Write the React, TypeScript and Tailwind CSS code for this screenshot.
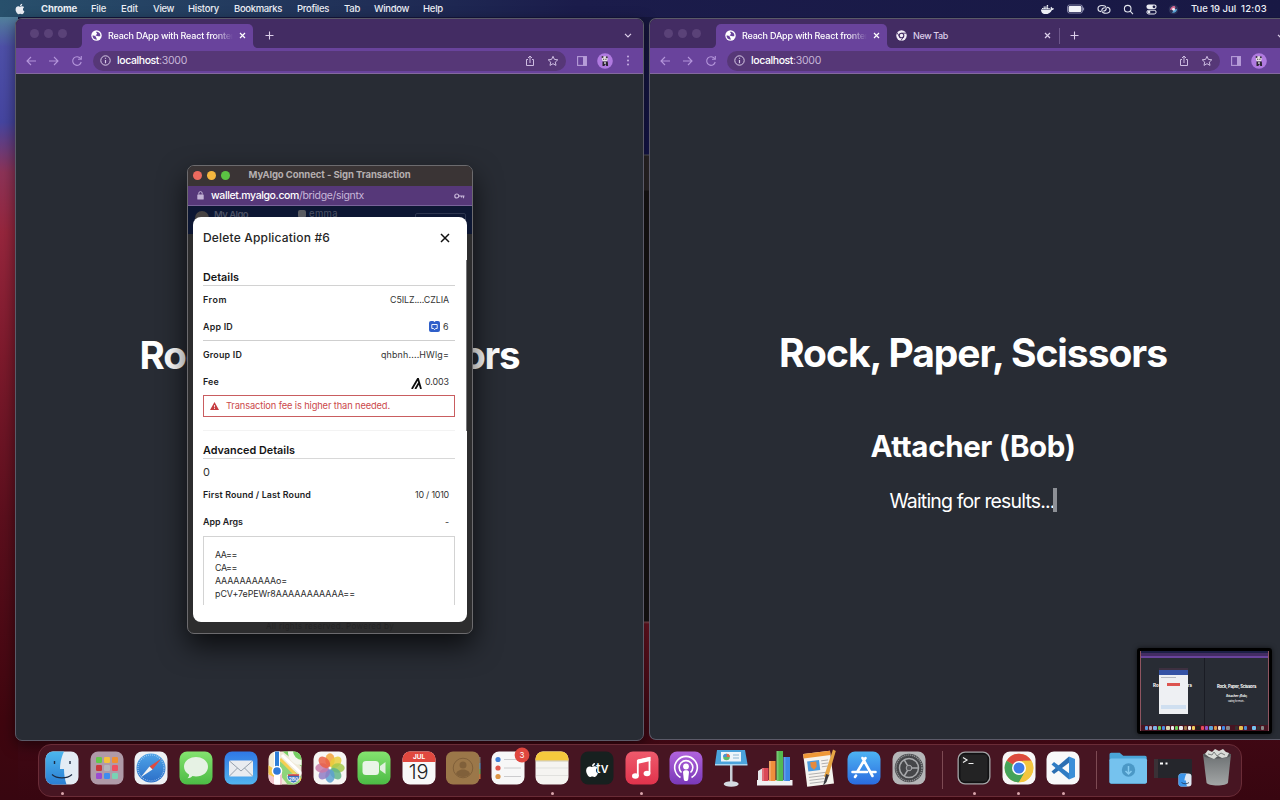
import { useLayoutEffect, useRef, type ReactNode } from "react";
import { FaApple, FaDocker } from "react-icons/fa";

/** Single line of text, tracked so that it occupies `w` pixels. */
function Fit({ w, className = "", children }: { w: number; className?: string; children: string }) {
  const ref = useRef<HTMLSpanElement>(null);
  useLayoutEffect(() => {
    const el = ref.current;
    if (!el) return;
    el.style.letterSpacing = "0px";
    const natural = el.getBoundingClientRect().width;
    el.style.letterSpacing = `${(w - natural) / children.length}px`;
  }, [w, children]);
  return (
    <span ref={ref} className={`block w-max shrink-0 whitespace-pre ${className}`}>
      {children}
    </span>
  );
}

const menus = [
  { label: "File", w: 15, cell: "w-[30px]" },
  { label: "Edit", w: 17, cell: "w-[32px]" },
  { label: "View", w: 21, cell: "w-[35px]" },
  { label: "History", w: 31, cell: "w-[46px]" },
  { label: "Bookmarks", w: 48, cell: "w-[63px]" },
  { label: "Profiles", w: 32, cell: "w-[47px]" },
  { label: "Tab", w: 16, cell: "w-[30px]" },
  { label: "Window", w: 35, cell: "w-[49px]" },
  { label: "Help", w: 20, cell: "w-[30px]" },
];

function MenuBar() {
  return (
    <header className="flex h-[17px] shrink-0 items-center bg-linear-to-r from-[#28506c] via-[#1b1c4b] via-45% to-[#181844] pt-px text-[9.5px] font-medium text-[#eceff5]">
      <div className="flex w-[41px] pl-[14px]">
        <FaApple className="size-[12px]" />
      </div>
      <div className="w-[50px]">
        <Fit w={36} className="font-bold">Chrome</Fit>
      </div>
      {menus.map((m) => (
        <div key={m.label} className={m.cell}>
          <Fit w={m.w}>{m.label}</Fit>
        </div>
      ))}
      <div className="ml-auto flex items-center pr-[13px]">
        <FaDocker className="size-[13px]" />
        <svg className="ml-[13px] h-[10px] w-[18px]" viewBox="0 0 18 10">
          <rect x="0.5" y="1" width="15" height="8" rx="2" fill="none" stroke="#9a9dbb" strokeWidth="0.8" />
          <rect x="1.6" y="2.1" width="12.8" height="5.8" rx="1" fill="#f2f3f8" />
          <path d="M16.6 3.6v2.8" stroke="#9a9dbb" />
        </svg>
        <svg className="ml-[12px] h-[11px] w-[14px]" viewBox="0 0 14 11" fill="none" stroke="#e3e5ee" strokeWidth="1.1">
          <path d="M4 7.6C2 7.4 1 6.200 1 4.700 1 2.800 2.600 1.500 5 1.500c2.600 0 4.200 1.200 4.200 2.900S7.800 7 6.200 7" />
          <path d="M10 3.200c2 .2 3 1.400 3 2.900 0 1.900-1.600 3.200-4 3.200-2.600 0-4.200-1.200-4.200-2.900S6.200 3.800 7.800 3.800" />
        </svg>
        <svg className="ml-[12px] size-[11px]" viewBox="0 0 11 11" fill="none" stroke="#e3e5ee" strokeWidth="1.1">
          <circle cx="4.700" cy="4.700" r="3.300" />
          <path d="M7.200 7.200l2.800 2.900" />
        </svg>
        <svg className="ml-[12px] size-[11px]" viewBox="0 0 11 11">
          <rect x="0.400" y="0.600" width="10.200" height="4.400" rx="2.200" fill="#e9eaf2" />
          <circle cx="8" cy="2.800" r="1.400" fill="#1a1a48" />
          <rect x="0.900" y="6.200" width="9.200" height="3.800" rx="1.900" fill="none" stroke="#e9eaf2" />
          <circle cx="3" cy="8.100" r="1.400" fill="#e9eaf2" />
        </svg>
        <svg className="ml-[11px] size-[11px]" viewBox="0 0 11 11">
          <circle cx="5.500" cy="5.500" r="4.800" fill="#2c3158" />
          <path d="M2 6c1-4 4-4.500 5-3.500S7 5 5.500 5.500z" fill="#d76a92" />
          <path d="M9 5c0 3-3 4.500-5 3.500 1-1 2-2 1.500-3z" fill="#5aa6d8" />
          <circle cx="5.500" cy="5.300" r="1.400" fill="#f2f0fa" />
        </svg>
        <Fit w={45} className="ml-[12px]">Tue 19 Jul</Fit>
        <Fit w={26} className="ml-[5px]">12:03</Fit>
      </div>
    </header>
  );
}

function Cross() {
  return (
    <svg className="size-[7px] shrink-0" viewBox="0 0 7 7" stroke="currentColor" strokeWidth="1.200">
      <path d="M1 1l5 5M6 1L1 6" />
    </svg>
  );
}

function Plus() {
  return (
    <svg className="size-[9px] shrink-0" viewBox="0 0 9 9" stroke="#dccfea" strokeWidth="1.100">
      <path d="M4.500 0.500v8M0.500 4.500h8" />
    </svg>
  );
}

function ActiveTab() {
  return (
    <div className="relative flex h-[24px] w-[171px] items-center rounded-t-[5px] bg-[#69439c] pb-px pl-[9px] text-white">
      <svg className="absolute bottom-0 -left-[5px] size-[5px]" viewBox="0 0 5 5">
        <path d="M5 0v5H0c3 0 5-2 5-5z" fill="#69439c" />
      </svg>
      <svg className="absolute -right-[5px] bottom-0 size-[5px]" viewBox="0 0 5 5">
        <path d="M0 0v5h5C2 5 0 3 0 0z" fill="#69439c" />
      </svg>
      <svg className="size-[11px] shrink-0" viewBox="0 0 11 11">
        <circle cx="5.500" cy="5.500" r="5.200" fill="#fff" />
        <path d="M1.500 5.500c2-.3 3.200.4 3.500 1.800.2 1 .8 1 .8 2.400-2.700 0-4.400-2-4.300-4.200zM5 1.700c.3 1.300 1.200 1 1 2.100-.1.900-1.300.9-1.400 1.700 1.500.3 2.700 1.200 4.600.7.600-2-.6-4.600-4.200-4.500z" fill="#69439c" />
      </svg>
      <div className="ml-[6px] w-[125px] overflow-hidden mask-r-from-85% mask-r-to-100%">
        <Fit w={128} className="text-[9px] font-medium">Reach DApp with React fronten</Fit>
      </div>
      <div className="ml-[6px]">
        <Cross />
      </div>
    </div>
  );
}

function TrafficDots() {
  return (
    <div className="-mt-[1px] flex w-[66px] gap-[5px] pl-[14px]">
      <i className="size-[9px] rounded-full bg-[#5a4278]" />
      <i className="size-[9px] rounded-full bg-[#5a4278]" />
      <i className="size-[9px] rounded-full bg-[#5a4278]" />
    </div>
  );
}

function Avatar() {
  return (
    <svg className="size-[16px] shrink-0" viewBox="0 0 16 16">
      <circle cx="8" cy="8" r="7.800" fill="#b07ae0" />
      <circle cx="7.800" cy="6" r="2.800" fill="#e8e2e4" />
      <circle cx="5.500" cy="4" r="1" fill="#3b3440" />
      <circle cx="9.800" cy="4.200" r="1" fill="#3b3440" />
      <path d="M6.200 6.200h1M8.400 6.200h1" stroke="#222" strokeWidth="1.100" />
      <path d="M5.500 8.500h5.300l.3 4.500H9.400l-1-2-1 2H5.500z" fill="#29242e" />
      <path d="M7.300 9h1.400v2H7.300z" fill="#ddd" />
    </svg>
  );
}

function Toolbar({ field, menu }: { field: string; menu?: boolean }) {
  return (
    <div className="flex h-[26px] shrink-0 items-center border-b border-[#84699f] bg-[#69439c] text-[#c7afe4]">
      <svg className="ml-[10px] h-[12px] w-[57px] shrink-0" viewBox="0 0 57 12" fill="none" stroke="#b394da" strokeWidth="1.100">
        <path d="M10 6H1M5 2L1 6l4 4M23 6h9M28 2l4 4-4 4" />
        <path d="M54.500 3.500A4.300 4.300 0 1 0 55.200 7M55.300 1v3.300H52" />
      </svg>
      <div className={`ml-[10px] flex h-[20px] shrink-0 items-center rounded-full bg-[#563777] pr-[7px] pl-[7px] ${field}`}>
        <svg className="size-[11px]" viewBox="0 0 11 11" fill="none" stroke="#d8cbe6" strokeWidth="1">
          <circle cx="5.500" cy="5.500" r="4.700" />
          <path d="M5.500 5v3.200M5.500 2.700v1.100" strokeWidth="1.200" />
        </svg>
        <Fit w={42} className="ml-[6px] text-[10.500px] font-medium text-white">localhost</Fit>
        <Fit w={28} className="text-[10.500px] text-[#c6b5d8]">:3000</Fit>
        <svg className="ml-auto size-[12px]" viewBox="0 0 12 12" fill="none" stroke="#cdbce0" strokeWidth="1">
          <path d="M4 4.500H2.500v6h7v-6H8M6 8V1M4 3l2-2 2 2" />
        </svg>
        <svg className="ml-[11px] size-[12px]" viewBox="0 0 12 12" fill="none" stroke="#cdbce0" strokeWidth="1">
          <path d="M6 1.300l1.400 3.100 3.400.4-2.500 2.300.7 3.300L6 8.700l-3 1.700.7-3.300L1.200 4.800l3.400-.4z" />
        </svg>
      </div>
      <svg className="mr-[10px] ml-[11px] h-[10px] w-[10px] shrink-0" viewBox="0 0 10 10">
        <rect x="0.600" y="0.600" width="8.800" height="8.800" fill="none" stroke="#b69cd8" strokeWidth="1.100" />
        <path d="M6 0.500h3.500v9H6z" fill="#b69cd8" />
      </svg>
      <Avatar />
      {menu && (
        <svg className="ml-[13px] h-[11px] w-[4px] shrink-0" viewBox="0 0 4 11" fill="#c7afe4">
          <circle cx="2" cy="1.500" r="1" />
          <circle cx="2" cy="5.500" r="1" />
          <circle cx="2" cy="9.500" r="1" />
        </svg>
      )}
    </div>
  );
}

function Chevron() {
  return (
    <svg className="h-[5px] w-[8px] shrink-0" viewBox="0 0 8 5" fill="none" stroke="#dccfea" strokeWidth="1.200">
      <path d="M1 0.800l3 3 3-3" />
    </svg>
  );
}

function LeftWindow() {
  return (
    <section className="absolute top-[18px] left-[15px] flex h-[723px] w-[629px] flex-col overflow-hidden rounded-[7px] border border-[#5b5a68] bg-[#282c34] shadow-[0_4px_14px_rgba(0,0,0,0.500)]">
      <div className="flex h-[29px] shrink-0 items-end bg-[#432c63]">
        <div className="self-center">
          <TrafficDots />
        </div>
        <ActiveTab />
        <div className="flex h-[24px] flex-1 items-center justify-between pr-[11px] pb-px pl-[12px]">
          <Plus />
          <Chevron />
        </div>
      </div>
      <Toolbar field="w-[473px]" menu />
      <h1 className="mt-[255px] flex justify-center text-[38.500px] leading-[52px] font-bold text-white">
        <Fit w={380}>Rock, Paper, Scissors</Fit>
      </h1>
    </section>
  );
}

function RightWindow() {
  return (
    <section className="absolute top-[18px] left-[649px] flex h-[722px] w-[631px] flex-col overflow-hidden rounded-l-[7px] border border-r-0 border-[#5b5a68] bg-[#282c34]">
      <div className="flex h-[29px] shrink-0 items-end bg-[#432c63]">
        <div className="self-center">
          <TrafficDots />
        </div>
        <ActiveTab />
        <div className="flex h-[24px] flex-1 items-center pb-px pl-[9px] text-[#dccfea]">
          <svg className="size-[11px]" viewBox="0 0 11 11">
            <circle cx="5.500" cy="5.500" r="5.200" fill="#f3eef8" />
            <circle cx="5.500" cy="5.500" r="2.300" fill="none" stroke="#432c63" strokeWidth="1.100" />
            <path d="M5.500 3.200h5M3.500 6.600L1 2.600M7.500 6.600l-2.500 4" stroke="#432c63" strokeWidth="0.900" />
          </svg>
          <Fit w={35} className="ml-[6px] text-[9px] font-medium">New Tab</Fit>
          <div className="ml-[96px]">
            <Cross />
          </div>
          <i className="ml-[8px] h-[16px] w-px bg-[#6d578b]" />
          <div className="ml-[10px]">
            <Plus />
          </div>
        </div>
        <div className="-mr-[5px] flex h-[24px] items-center">
          <Chevron />
        </div>
      </div>
      <Toolbar field="w-[493px]" />
      <div className="flex w-[646px] flex-col items-center text-white">
        <h1 className="mt-[253px] text-[39px] leading-[52px] font-bold">
          <Fit w={388}>Rock, Paper, Scissors</Fit>
        </h1>
        <h2 className="mt-[47px] text-[29.500px] leading-[40px] font-bold">
          <Fit w={205}>Attacher (Bob)</Fit>
        </h2>
        <p className="mt-[21px] flex items-center text-[19.500px] leading-[28px]">
          <Fit w={165}>Waiting for results...</Fit>
          <i className="-mt-[2px] -ml-[2px] h-[24px] w-[4px] bg-[#8d9096]" />
        </p>
      </div>
    </section>
  );
}

function Row({ label, w, height, children }: { label: string; w: number; height: string; children: ReactNode }) {
  return (
    <div className={`flex items-center justify-between pr-[6px] ${height}`}>
      <Fit w={w} className="font-semibold text-[#1d1d1f]">{label}</Fit>
      <div className="flex items-center text-[#333]">{children}</div>
    </div>
  );
}

function WalletPopup() {
  return (
    <section className="absolute top-[165px] left-[187px] flex h-[469px] w-[286px] flex-col overflow-hidden rounded-[7px] border border-[#6c6b6e] bg-[#2d2d2e] shadow-[0_12px_28px_rgba(0,0,0,0.700)]">
      <div className="flex h-[20px] shrink-0 items-center bg-[#3a3435] pb-[2px] pl-[5px]">
        <div className="flex gap-[5px]">
          <i className="size-[9px] rounded-full bg-[#ec6a5e]" />
          <i className="size-[9px] rounded-full bg-[#f4b63f]" />
          <i className="size-[9px] rounded-full bg-[#5bc243]" />
        </div>
        <Fit w={162} className="ml-[18.500px] text-[9.500px] font-bold text-[#b5afb0]">MyAlgo Connect - Sign Transaction</Fit>
      </div>
      <div className="flex h-[20px] shrink-0 items-center border-b border-[#79639a] bg-[#563879] pr-[7px] pl-[9px]">
        <svg className="h-[9px] w-[7px]" viewBox="0 0 7 9">
          <rect x="0.300" y="3.500" width="6.400" height="5" rx="0.600" fill="#c3b3d6" />
          <path d="M1.800 3.500V2.300a1.700 1.700 0 0 1 3.400 0v1.200" fill="none" stroke="#c3b3d6" />
        </svg>
        <Fit w={88} className="ml-[7px] text-[10.500px] font-medium text-white">wallet.myalgo.com</Fit>
        <Fit w={65} className="text-[10.500px] text-[#c8b7da]">/bridge/signtx</Fit>
        <svg className="ml-auto h-[6px] w-[11px]" viewBox="0 0 11 6" fill="none" stroke="#c8b7da" strokeWidth="1.200">
          <circle cx="2.800" cy="3" r="2" />
          <path d="M4.800 3H10.500M9.500 3v2.200M7.500 3v1.500" />
        </svg>
      </div>
      <div className="flex h-[28px] shrink-0 items-start bg-[#0d1733] pl-[7px] text-[9.500px] text-[#4b5164]">
        <i className="mt-[5px] size-[14px] rounded-full bg-[#474343]" />
        <Fit w={34} className="mt-[2px] ml-[5px] font-semibold">My Algo</Fit>
        <i className="mt-[4px] ml-[50px] size-[8px] rounded-[2px] bg-[#5a5c62]" />
        <Fit w={29} className="mt-px ml-[3px]">emma</Fit>
        <i className="mt-[7px] mr-[6px] ml-auto h-[15px] w-[51px] rounded-[2px] border border-[#2d3650]" />
      </div>
      <div className="relative z-10 -mt-[17px] ml-[5px] flex h-[405px] w-[274px] shrink-0 flex-col rounded-[8px] bg-white pr-[12px] pl-[10px] text-[8.900px]">
        <i className="absolute top-[43px] right-0 h-[171px] w-px bg-[#77777a]" />
        <div className="flex h-[42px] shrink-0 items-center justify-between pr-[5px] text-[#262626]">
          <Fit w={127} className="text-[12px] font-medium">Delete Application #6</Fit>
          <svg className="size-[10px]" viewBox="0 0 10 10" stroke="#111" strokeWidth="1.500">
            <path d="M1 1l8 8M9 1L1 9" />
          </svg>
        </div>
        <div className="mt-[9px] flex h-[18px] shrink-0 items-center border-b border-[#d2d2d2] pt-[3px] text-[#141414]">
          <Fit w={36} className="text-[10.800px] font-semibold">Details</Fit>
        </div>
        <Row label="From" w={24} height="h-[27px]">
          <Fit w={59}>C5ILZ....CZLIA</Fit>
        </Row>
        <div className="border-b border-[#cfcfcf]">
          <Row label="App ID" w={30} height="h-[27px]">
            <svg className="size-[11px]" viewBox="0 0 11 11">
              <rect width="11" height="11" rx="2" fill="#2f5fc9" />
              <path d="M2.800 3.500h5.400v4H6.600l-1 1.200-1-1.200H2.800z" fill="none" stroke="#fff" strokeWidth="0.900" />
              <path d="M4.300 0h2.400l-1.200 1z" fill="#fff" />
            </svg>
            <Fit w={6} className="ml-[3px]">6</Fit>
          </Row>
        </div>
        <Row label="Group ID" w={39} height="h-[27px]">
          <Fit w={68}>qhbnh....HWlg=</Fit>
        </Row>
        <Row label="Fee" w={16} height="h-[27px]">
          <svg className="mt-[3px] h-[11px] w-[11px]" viewBox="0 0 11 11" fill="none" stroke="#0c0c0c" strokeWidth="1.800">
            <path d="M0.900 11L7 0.500l3 10.500M4.300 11l4-6.800" />
          </svg>
          <Fit w={24} className="ml-[3px]">0.003</Fit>
        </Row>
        <div className="flex h-[22px] w-[252px] shrink-0 items-center border border-[#c95d60] pl-[6px] text-[#cb4a4c]">
          <svg className="h-[8px] w-[9px]" viewBox="0 0 9 8">
            <path d="M4.500 0L9 8H0z" fill="#c63c40" />
            <path d="M4.500 3v2.400M4.500 6v1" stroke="#fff" strokeWidth="0.800" />
          </svg>
          <Fit w={164} className="ml-[7px] text-[9.300px]">Transaction fee is higher than needed.</Fit>
        </div>
        <i className="mt-[13px] h-px shrink-0 bg-[#f3f3f3]" />
        <div className="mt-[9px] flex h-[19px] shrink-0 items-center border-b border-[#d8d8d8] pt-[4px] text-[#141414]">
          <Fit w={92} className="text-[10.800px] font-semibold">Advanced Details</Fit>
        </div>
        <div className="flex h-[27px] shrink-0 items-center text-[11px] text-[#333]">
          <Fit w={8}>0</Fit>
        </div>
        <Row label="First Round / Last Round" w={108} height="h-[18px]">
          <Fit w={34}>10 / 1010</Fit>
        </Row>
        <Row label="App Args" w={40} height="h-[36px]">
          <Fit w={4}>-</Fit>
        </Row>
        <div className="-mt-[4px] flex h-[69px] w-[252px] shrink-0 flex-col border border-b-0 border-[#d3d3d3] pt-[11px] pl-[11px] leading-[13px] text-[#2b2b2b]">
          <Fit w={22}>AA==</Fit>
          <Fit w={22}>CA==</Fit>
          <Fit w={72}>AAAAAAAAAAo=</Fit>
          <Fit w={140}>pCV+7ePEWr8AAAAAAAAAAA==</Fit>
        </div>
      </div>
      <p className="flex justify-center text-[8px] leading-[9px] text-[#232324]">
        <Fit w={128}>All rights reserved. Powered by</Fit>
      </p>
    </section>
  );
}

function Icon({ children }: { children: ReactNode }) {
  return (
    <svg className="size-[34px] overflow-visible" viewBox="0 0 34 34">
      {children}
    </svg>
  );
}

function Tile({ fill }: { fill: string }) {
  return <rect x="0.500" y="0.500" width="33" height="33" rx="7.500" fill={fill} />;
}

const padColors = ["#62c94c", "#f5c23d", "#ef8f32", "#c9393c", "#b5b5ba", "#ee4f62", "#9a4bd0", "#3f8cf0", "#79d3b4"];
const petals = ["#f3a33a", "#e9cf3c", "#a5c94b", "#62b588", "#5c9fd0", "#8f7cc4", "#c87aa8", "#ea5f45"];

const Finder = (
  <Icon>
    <Tile fill="#e3ecf5" />
    <path d="M8 .500h11C16 7 15 13 15 18h4c0 6 1 11 2.500 15.500H8A7.500 7.500 0 0 1 .500 26V8A7.500 7.500 0 0 1 8 .500z" fill="url(#g-finder)" />
    <path d="M9.500 10v3M25 10v3" stroke="#1d2c44" strokeWidth="1.400" />
    <path d="M7 23.500c5 4.500 15 4.500 20 0" fill="none" stroke="#1d2c44" strokeWidth="1.200" />
  </Icon>
);
const Launchpad = (
  <Icon>
    <Tile fill="#b09aa8" />
    {padColors.map((c, i) => (
      <rect key={c} x={6 + (i % 3) * 8} y={6 + Math.floor(i / 3) * 8} width="6" height="6" rx="1.200" fill={c} />
    ))}
  </Icon>
);
const Safari = (
  <Icon>
    <Tile fill="#eef1f4" />
    <circle cx="17" cy="17" r="14.500" fill="url(#g-blue)" />
    <circle cx="17" cy="17" r="13" fill="none" stroke="#d5e9fa" strokeWidth="1.300" strokeDasharray="0.500 1.500" />
    <path d="M27.500 7.500L15.500 15.500l3 3z" fill="#e04b40" />
    <path d="M6.500 26.500l9-11 3 3z" fill="#f2f2f2" />
  </Icon>
);
const Messages = (
  <Icon>
    <Tile fill="url(#g-green)" />
    <path d="M17 6c7 0 12 4.300 12 9.800s-5 9.700-12 9.700c-1.200 0-2.400-.1-3.500-.4-1.400 1.500-3.300 2.200-5 2.200 1.200-1 1.700-2.400 1.500-3.800C6.900 21.700 5 19 5 15.800 5 10.300 10 6 17 6z" fill="#e6f2e4" />
  </Icon>
);
const Mail = (
  <Icon>
    <Tile fill="url(#g-mail)" />
    <rect x="5" y="9.500" width="24" height="16" rx="1.500" fill="#e9ecf0" />
    <path d="M5.500 10l11.500 10L28.500 10M5.500 25l8-8M28.500 25l-8-8" fill="none" stroke="#8b97a5" strokeWidth="0.900" />
  </Icon>
);
const Maps = (
  <Icon>
    <g clipPath="url(#tile-clip)">
      <path d="M0 0h34v34H0z" fill="#f0ead8" />
      <path d="M14 0h20v16z" fill="#76cf63" />
      <path d="M20 0a13 13 0 0 0 14 14V9A9 9 0 0 1 25 0z" fill="#f6f6ee" />
      <path d="M12 10l22 16v8H20L12 24z" fill="#8fd47a" />
      <path d="M12 8l22 22" stroke="#f5cf52" strokeWidth="3" />
      <path d="M14 4l20 19" stroke="#fff" strokeWidth="3" />
      <path d="M0 22h14v12H0z" fill="#f1c5cc" />
      <path d="M0 14l6 4v8l-6-3z" fill="#f3c84c" />
      <path d="M6 0h6v34H6z" fill="#fff" />
      <path d="M7 0h4v16H7z" fill="#2d7dd8" />
      <circle cx="9" cy="20" r="5.300" fill="#fff" />
      <circle cx="9" cy="20" r="3.800" fill="#2e79d9" />
      <path d="M19.500 24c3-1 8-1 12 0 1 4-2 7-6 8-4-1-7-4-6-8z" fill="#3c6fc0" stroke="#fff" strokeWidth="0.800" />
      <path d="M20 24h11" stroke="#d8443c" strokeWidth="1.500" />
    </g>
    <text x="25.500" y="29.500" textAnchor="middle" fontSize="4.800" fontWeight="700" fill="#fff">280</text>
  </Icon>
);
const Photos = (
  <Icon>
    <Tile fill="#f7f6f4" />
    {petals.map((c, i) => (
      <ellipse key={c} cx="17" cy="9" rx="4.700" ry="6.700" fill={c} fillOpacity="0.850" transform={`rotate(${i * 45} 17 17)`} />
    ))}
  </Icon>
);
const FaceTime = (
  <Icon>
    <Tile fill="url(#g-green)" />
    <rect x="5.500" y="10" width="16.500" height="14" rx="3.500" fill="#e9f5e7" />
    <path d="M23 15l5.500-4v12L23 19z" fill="#e0f0dd" />
  </Icon>
);
const Calendar = (
  <Icon>
    <Tile fill="#f8f8f8" />
    <path d="M8 .500h18A7.500 7.500 0 0 1 33.500 8v3H.500V8A7.500 7.500 0 0 1 8 .500z" fill="#e0483f" />
    <text x="17" y="8" textAnchor="middle" fontSize="6.500" fontWeight="700" fill="#fff">JUL</text>
    <text x="16.500" y="28" textAnchor="middle" fontSize="20" fontWeight="300" letterSpacing="-0.300" fill="#222">19</text>
  </Icon>
);
const Contacts = (
  <Icon>
    <path d="M30 6h4.500v6H30z" fill="#777" />
    <path d="M30 12h4.500v6H30z" fill="#4b9fd6" />
    <path d="M30 18h4.500v5H30z" fill="#5db55a" />
    <path d="M30 23h4.500v5H30z" fill="#d7743d" />
    <rect x="0" y="0.500" width="33.500" height="33" rx="7" fill="#9b7749" />
    <circle cx="17" cy="17" r="9.800" fill="none" stroke="#80603a" />
    <circle cx="17" cy="14" r="3.500" fill="#80603a" />
    <path d="M10 23c1-6 13-6 14 0-3 4-11 4-14 0z" fill="#80603a" />
  </Icon>
);
const Reminders = (
  <Icon>
    <Tile fill="#f7f7f7" />
    <circle cx="7" cy="8.500" r="2.600" fill="#3f7fd8" />
    <circle cx="7" cy="17" r="2.600" fill="#e0564b" />
    <circle cx="7" cy="25.500" r="2.600" fill="#dd9443" />
    <path d="M13 8.500h14M13 17h17M13 25.500h17" stroke="#c6c6c8" strokeWidth="0.900" />
    <circle cx="31" cy="4" r="7.400" fill="#e0473f" />
    <text x="31" y="7" textAnchor="middle" fontSize="8" fill="#fff">3</text>
  </Icon>
);
const Notes = (
  <Icon>
    <Tile fill="#f5f4f1" />
    <path d="M8 .500h18A7.500 7.500 0 0 1 33.500 8v1.500H.500V8A7.500 7.500 0 0 1 8 .500z" fill="#f6c93d" />
    <path d="M.500 10h33" stroke="#a99b76" strokeDasharray="1 1" />
    <path d="M1 17h32M1 24.500h32" stroke="#d8d8d6" strokeWidth="0.700" />
  </Icon>
);
const AppleTv = (
  <Icon>
    <Tile fill="#17201f" />
    <FaApple x="4" y="11" width="11" height="11" color="#fff" />
    <text x="22.300" y="21.500" textAnchor="middle" fontSize="13.500" fontWeight="500" letterSpacing="0" fill="#fff">tv</text>
  </Icon>
);
const Music = (
  <Icon>
    <Tile fill="url(#g-music)" />
    <path d="M12.800 9.500L24.500 6.800v15.700" fill="none" stroke="#fff" strokeWidth="1.800" />
    <path d="M12.800 25V9.500" stroke="#fff" strokeWidth="1.800" />
    <path d="M12 9l13.400-3v4L12 13z" fill="#fff" />
    <ellipse cx="10.400" cy="25" rx="3.400" ry="2.700" fill="#fff" />
    <ellipse cx="22" cy="22.500" rx="3.400" ry="2.700" fill="#fff" />
  </Icon>
);
const Podcasts = (
  <Icon>
    <Tile fill="url(#g-pod)" />
    <path d="M11.500 26.500a11.300 11.300 0 1 1 11 0" fill="none" stroke="#fff" strokeWidth="1.600" />
    <path d="M12.500 21.500a6.800 6.800 0 1 1 9 0" fill="none" stroke="#fff" strokeWidth="1.600" />
    <circle cx="17" cy="15.500" r="2.900" fill="#fff" />
    <path d="M14 21c0-2.500 6-2.500 6 0l-.8 7.500c-.4 2-4 2-4.400 0z" fill="#fff" />
  </Icon>
);
const Keynote = (
  <Icon>
    <path d="M16 13h2.500v20H16z" fill="#c8ced6" />
    <ellipse cx="17.200" cy="33" rx="7.500" ry="2.800" fill="#d5dbe2" />
    <path d="M3-1h28l2.500 14H1z" fill="#4ba3dc" />
    <path d="M1 13h32.500v1.500H1z" fill="#a9d5f0" />
    <path d="M7 1h20v9.500H7z" fill="#eef5fa" />
    <circle cx="12.500" cy="6" r="3.300" fill="#5dbb6b" />
    <path d="M12.500 6V2.700a3.300 3.300 0 0 1 3.300 3.300z" fill="#e86a4a" />
    <path d="M12.500 6H9.200a3.300 3.300 0 0 1 3.300-3.300z" fill="#4a8fe0" />
    <path d="M19 4h6M19 7h6" stroke="#8cb6d3" />
  </Icon>
);
const Numbers = (
  <Icon>
    <path d="M0 20l5-3v15h-5z" fill="#e5e5e8" />
    <path d="M-1 29h35.500v5.500H-1z" fill="#f1f1f3" />
    <rect x="4" y="17" width="6.500" height="13" fill="#db4a57" />
    <rect x="11" y="10" width="6.500" height="20" fill="#ef8f3c" />
    <rect x="18.500" y="0" width="6.500" height="30" fill="#53b94f" />
    <rect x="25.500" y="6" width="6.500" height="24" fill="#3d87e4" />
    <path d="M4 17h2v13H4zM11 10h2v20h-2zM18.500 0h2v30h-2zM25.500 6h2v24h-2z" fill="#fff" fillOpacity="0.200" />
  </Icon>
);
const Pages = (
  <Icon>
    <g transform="rotate(-7 17 17)">
      <path d="M2 1h27v33H2z" fill="#f6f4ef" />
      <path d="M2 1h27v4.500H2z" fill="#ef9838" />
      <path d="M5 9h12v10H5z" fill="#4f9de0" />
      <path d="M8 10h6v5l-3 3-3-3z" fill="#e78a3e" />
      <path d="M19 10h7M19 13h7M19 16h7M5 22h21M5 25h21M5 28h15M5 31h15" stroke="#a3a3a5" strokeWidth="0.800" />
    </g>
    <path d="M30-1.500l2.800 1.500-8 27-3.800-1.500z" fill="#e7a644" />
    <path d="M23 23l3 1-2.500 7-3.500 4z" fill="#3b3a3f" />
  </Icon>
);
const AppStore = (
  <Icon>
    <Tile fill="url(#g-mail2)" />
    <path d="M18.500 7L10.500 20.500M15.500 7l10 18M5.500 21h14.500M24.500 21h4M9 24.500l-1 1.500" stroke="#fff" strokeWidth="2.600" strokeLinecap="round" />
  </Icon>
);
const Settings = (
  <Icon>
    <Tile fill="#b5b6b8" />
    <circle cx="17" cy="17" r="14.300" fill="#454649" />
    <circle cx="17" cy="17" r="13" fill="none" stroke="#8e8f92" strokeWidth="1.500" strokeDasharray="1.200 0.800" />
    <circle cx="17" cy="17" r="9.500" fill="none" stroke="#a8a9ac" strokeWidth="1.500" />
    <path d="M17 17l9.500 0M17 17l-5-8.500M17 17l-5 8.500" stroke="#a8a9ac" strokeWidth="1.500" />
    <circle cx="17" cy="17" r="2.800" fill="#55565a" stroke="#a8a9ac" />
  </Icon>
);
const Terminal = (
  <Icon>
    <Tile fill="#a5a5a7" />
    <rect x="1.800" y="1.800" width="30.400" height="30.400" rx="6.300" fill="#111112" />
    <rect x="3.500" y="3.500" width="27" height="27" rx="4" fill="#232324" />
    <path d="M6 6.500l4 2.500-4 2.500M11.500 12.500h5" fill="none" stroke="#eee" strokeWidth="1.200" />
  </Icon>
);
const Chrome = (
  <Icon>
    <Tile fill="#f7f7f7" />
    <circle cx="17" cy="17" r="14.300" fill="#f3c63f" />
    <path d="M17 17L4.600 9.850A14.300 14.300 0 0 1 29.400 9.850L17 10z" fill="#dc4b3e" />
    <path d="M4.600 9.850A14.300 14.300 0 0 0 17 31.300l6-10.300-6-4z" fill="#45a35a" />
    <path d="M29.400 9.850A14.300 14.300 0 0 1 17 31.300l6-10.500-2-10.950z" fill="#f3c63f" />
    <circle cx="17" cy="17" r="7" fill="#fff" />
    <circle cx="17" cy="17" r="5.500" fill="#3f7de8" />
  </Icon>
);
const VsCode = (
  <Icon>
    <Tile fill="#f8f9fa" />
    <path d="M23 5.500l6 2.500v18l-6 2.500z" fill="#3a8fd8" />
    <path d="M23 5.500L5.500 20.500l2.500 2.500L23 11.800z" fill="#2b6fb3" />
    <path d="M23 28.500L5.500 13.500 8 11l15 11.200z" fill="#2f7cc4" />
  </Icon>
);
const Downloads = (
  <Icon>
    <path d="M-1.500 3.500c0-1 .7-1.700 1.700-1.700h8.500l3.500 3H34c1 0 1.700.7 1.700 1.700V31c0 1-.7 1.700-1.700 1.700H.200c-1 0-1.700-.7-1.700-1.700z" fill="#4aa5d8" />
    <rect x="-1.500" y="7.500" width="37.500" height="25" rx="1.800" fill="#75c2ee" />
    <circle cx="17.500" cy="19" r="6.700" fill="#4b98c6" />
    <path d="M17.500 15v7.500M14.500 20l3 3 3-3" fill="none" stroke="#85cbf1" strokeWidth="1.500" />
  </Icon>
);
const Minimised = (
  <Icon>
    <rect x="-2" y="8" width="38" height="19" rx="1" fill="#25262c" />
    <path d="M-2 8h4v19h-4z" fill="#3a3136" />
    <path d="M4 12.500h3M9.500 12.500h2" stroke="#fff" strokeWidth="1.800" />
    <rect x="22.500" y="22.500" width="13" height="13" rx="3" fill="#dfe8f3" />
    <path d="M25.500 22.500h5c-1.500 3-2 5-2 7h1.500c0 2 .3 4 1 6h-5.500a3 3 0 0 1-3-3v-7a3 3 0 0 1 3-3z" fill="#3b95ea" />
    <path d="M25.500 31.500c2 1.700 5.500 1.700 7.500 0" fill="none" stroke="#23344f" strokeWidth="0.800" />
  </Icon>
);
const Trash = (
  <Icon>
    <path d="M3 3h28l-3 28.500c-.5 4-21 4-21.500 0z" fill="url(#g-trash)" />
    <ellipse cx="17" cy="4" rx="14" ry="3.500" fill="#55585a" />
    <path d="M5 3l3-4 4 2 3-3 4 2 4-2 3 3 3 1-2 4-5 1-4-2-4 3-5-2z" fill="#d9dcd8" />
    <path d="M8 3l4 1 2-3 3 4 4-3 4 2" fill="none" stroke="#6f7474" strokeWidth="0.900" />
  </Icon>
);

function DockItem({ icon, running }: { icon: ReactNode; running?: boolean }) {
  return (
    <div className="flex w-[44.570px] shrink-0 flex-col items-center">
      {icon}
      {running && <i className="mt-[7px] size-[3px] rounded-full bg-[#d9a5ac]" />}
    </div>
  );
}

function Divider() {
  return <i className="mr-[9px] ml-[10.500px] h-[38px] w-px shrink-0 bg-[#7d4a53]" />;
}

function Dock() {
  return (
    <nav className="absolute top-[744px] left-[38px] flex h-[53px] w-[1204px] items-start rounded-[13px] border border-[#6a2c37] bg-[#471522] pt-[6px] pl-px">
      <DockItem icon={Finder} running />
      <DockItem icon={Launchpad} />
      <DockItem icon={Safari} />
      <DockItem icon={Messages} />
      <DockItem icon={Mail} />
      <DockItem icon={Maps} />
      <DockItem icon={Photos} />
      <DockItem icon={FaceTime} />
      <DockItem icon={Calendar} />
      <DockItem icon={Contacts} />
      <DockItem icon={Reminders} />
      <DockItem icon={Notes} running />
      <DockItem icon={AppleTv} />
      <DockItem icon={Music} running />
      <DockItem icon={Podcasts} />
      <DockItem icon={Keynote} />
      <DockItem icon={Numbers} />
      <DockItem icon={Pages} />
      <DockItem icon={AppStore} />
      <DockItem icon={Settings} />
      <Divider />
      <DockItem icon={Terminal} running />
      <DockItem icon={Chrome} running />
      <DockItem icon={VsCode} running />
      <Divider />
      <DockItem icon={Downloads} />
      <DockItem icon={Minimised} />
      <DockItem icon={Trash} />
    </nav>
  );
}

const miniDock = ["#5a9be0", "#b8a7b4", "#7db2e8", "#6cd05c", "#4a90e2", "#d9d8b0", "#eee", "#6cd05c", "#eee", "#a07c4c", "#f4f4f4", "#f2d060", "#222", "#ea4a5e", "#9450c8", "#5aa8dc", "#d8964a", "#e8e0d0", "#3f8ae8", "#88898c", "#471522", "#333", "#e6c050", "#4a8cd0", "#471522", "#75c2ee", "#333", "#888"];

function ScreenshotPreview() {
  return (
    <aside className="absolute top-[648px] left-[1137px] flex h-[86px] w-[135px] rounded-[3px] bg-black p-[3px] shadow-[0_0_5px_rgba(0,0,0,0.600)]">
      <div className="flex flex-1 flex-col overflow-hidden border-x border-[#8f5560] bg-[#282c34] text-white">
        <div className="h-[2px] bg-[#1c1f45]" />
        <div className="h-[3px] bg-[#432c63]" />
        <div className="h-[2px] bg-[#69439c]" />
        <div className="flex flex-1">
          <div className="flex flex-1 items-start justify-center border-r border-[#1a1c24] pt-[10px]">
            <span className="mt-[16px] text-[4.500px] leading-none font-bold">Ro</span>
            <div className="flex h-[46px] w-[29px] flex-col bg-[#eef0f3]">
              <i className="h-[2px] bg-[#3d3040]" />
              <i className="h-[5px] bg-[#3553a5]" />
              <i className="mt-[2px] ml-[2px] h-px w-[15px] bg-[#b8bcc4]" />
              <i className="mt-[5px] ml-[8px] h-[3px] w-[13px] bg-[#dc5450]" />
              <i className="mx-[2px] mt-[19px] h-[4px] bg-[#cfdff0]" />
            </div>
            <span className="mt-[16px] text-[4.500px] leading-none font-bold">rs</span>
          </div>
          <div className="flex flex-1 flex-col items-center pt-[26px]">
            <Fit w={39} className="text-[4.200px] leading-[5px] font-bold">Rock, Paper, Scissors</Fit>
            <Fit w={21} className="mt-[5px] text-[3px] leading-[4px] font-bold">Attacher (Bob)</Fit>
            <Fit w={17} className="mt-[2px] text-[2px] leading-[3px]">Waiting for results...</Fit>
          </div>
        </div>
        <div className="flex h-[6px] items-center justify-center gap-[1px] bg-[#471522]">
          {miniDock.map((c, i) => (
            <i key={i} className="size-[3.300px] rounded-[1px]" style={{ backgroundColor: c }} />
          ))}
        </div>
      </div>
    </aside>
  );
}

function Gradients() {
  const list = [
    ["g-finder", "#4cb6ee", "#2b7fd4"],
    ["g-blue", "#4da3e8", "#2c6fc8"],
    ["g-green", "#84e36f", "#4cbb45"],
    ["g-mail", "#2f78e6", "#52b4ef"],
    ["g-mail2", "#4db3f2", "#2a6be0"],
    ["g-music", "#ef5a6c", "#e0334c"],
    ["g-pod", "#b163dc", "#7a39b8"],
    ["g-trash", "#6c7072", "#a3a6a6"],
  ];
  return (
    <svg className="absolute size-0">
      <defs>
        {list.map(([id, a, b]) => (
          <linearGradient key={id} id={id} x1="0" y1="0" x2="0" y2="1">
            <stop offset="0" stopColor={a} />
            <stop offset="1" stopColor={b} />
          </linearGradient>
        ))}
        <clipPath id="tile-clip">
          <rect x="0.500" y="0.500" width="33" height="33" rx="7.500" />
        </clipPath>
      </defs>
    </svg>
  );
}

export default function App() {
  return (
    <div className="relative flex h-[800px] w-[1280px] flex-col overflow-hidden bg-[#3c0611] font-['Inter','Liberation_Sans',sans-serif]">
      <Gradients />
      <MenuBar />
      <main className="flex h-[783px]">
        <div className="h-full w-[18px] bg-[linear-gradient(#52809c_0px,#4e50a8_30px,#4545a0_105px,#8c3357_155px,#96263d_215px,#7d1a2c_340px,#5c0f1d_500px,#40060f_700px,#380610_783px)]" />
        <div className="h-full flex-1 bg-[linear-gradient(#15163c_0px,#141448_137px,#55555a_138px,#2a2527_139px,#2a2527_173px,#161314_174px,#161314_604px,#7c4a50_605px,#651220_607px,#400814_710px,#380610_783px)]" />
      </main>
      <LeftWindow />
      <RightWindow />
      <WalletPopup />
      <ScreenshotPreview />
      <Dock />
    </div>
  );
}
